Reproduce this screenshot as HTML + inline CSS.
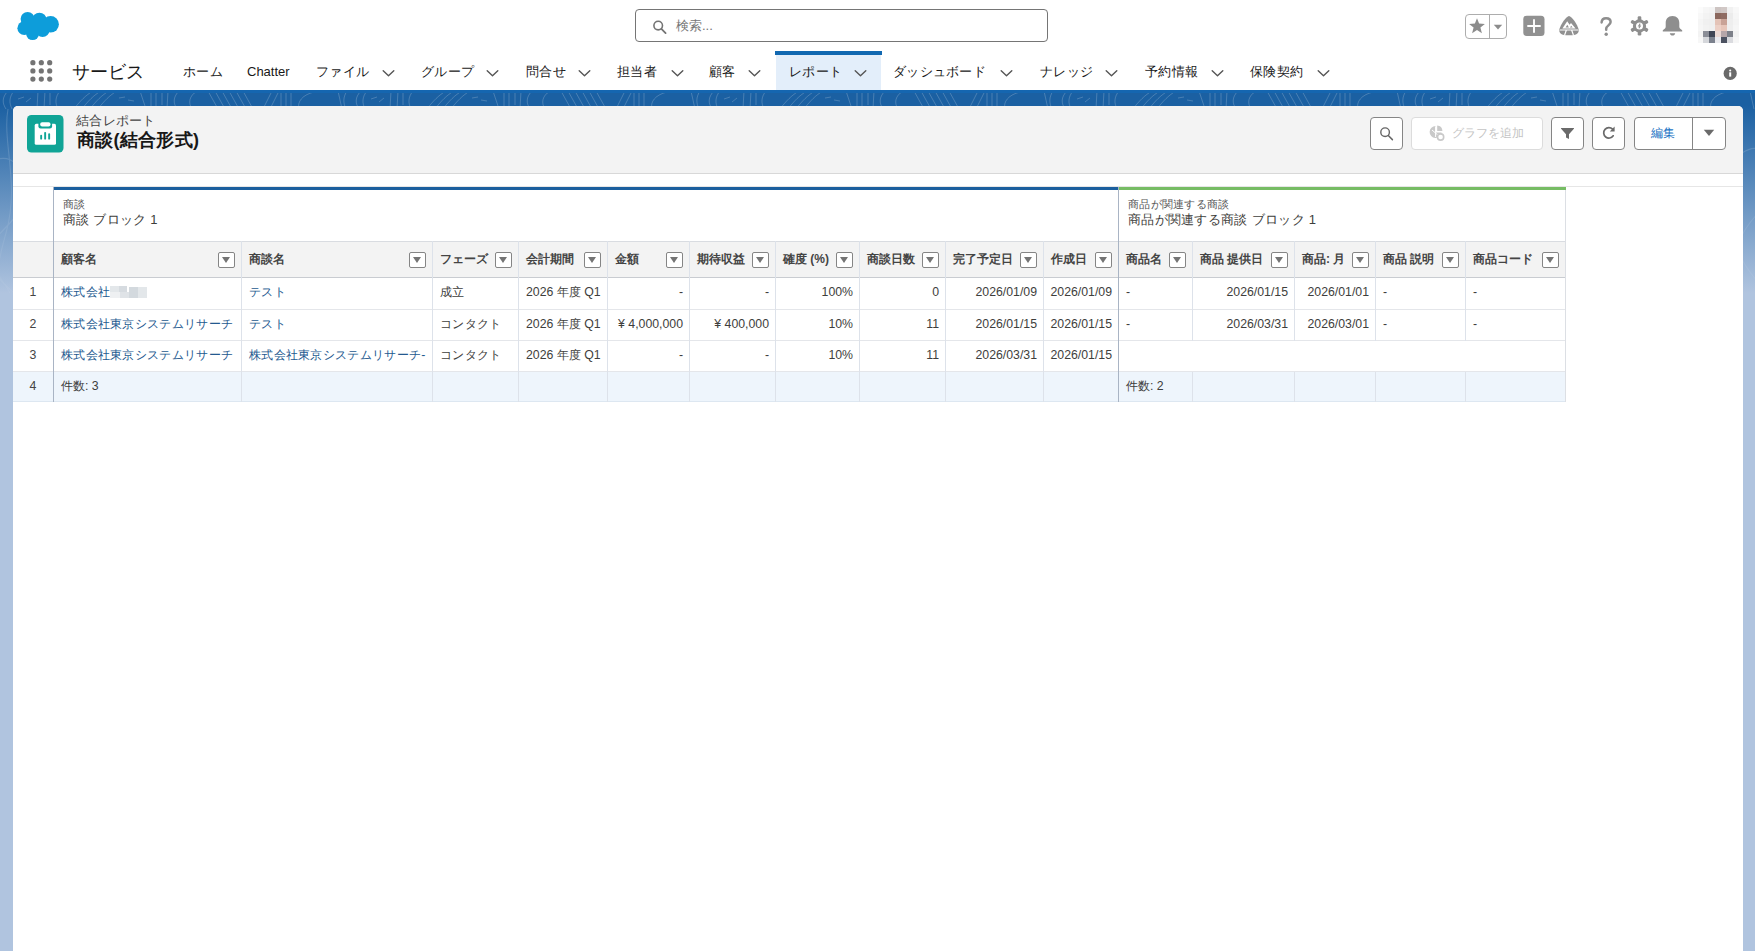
<!DOCTYPE html>
<html lang="ja"><head><meta charset="utf-8"><title>商談(結合形式) | Salesforce</title>
<style>
*{box-sizing:border-box;margin:0;padding:0}
html,body{width:1755px;height:951px;overflow:hidden}
body{position:relative;background:#B0C4DF;font-family:"Liberation Sans",sans-serif;font-size:13px;color:#3e3e3c}
.a{position:absolute;white-space:nowrap}
.t{position:absolute;white-space:nowrap;line-height:20px;height:20px}
#hdr{left:0;top:0;width:1755px;height:90px;background:#fff}
#navline{left:0;top:90px;width:1755px;height:3px;background:#1566b0}
#band{left:0;top:93px;width:1755px;height:200px;background:linear-gradient(to bottom,#1b60a2 0,#1b60a2 6%,rgba(176,196,223,0) 100%)}
#panel{left:13px;top:106px;width:1730px;height:860px;background:#fff;border-radius:5px 5px 0 0}
#phead{left:0;top:0;width:1730px;height:68px;background:#f3f3f3;border-bottom:1px solid #d8d8d8;border-radius:5px 5px 0 0}
.nav{font-size:13.3px;color:#181818;top:62px;letter-spacing:.25px}
.btn{position:absolute;top:11px;height:33px;background:#fff;border:1px solid #858585;border-radius:4px}
.th{font-size:12px;font-weight:bold;color:#444;top:143px}
.td{font-size:12.3px;color:#3e3e3c}
.j{letter-spacing:.3px}
.lk{color:#24598f}
.dd{position:absolute;width:17px;height:16px;border:1px solid #858585;border-radius:2px;background:#fff;top:146px}
.dd:after{content:"";position:absolute;left:3px;top:4px;border-left:4.5px solid transparent;border-right:4.5px solid transparent;border-top:6px solid #747474}
.vl{position:absolute;width:1px;background:#dde2ea}
.hl{position:absolute;height:1px;background:#e4e6ea}
</style></head><body>
<div class="a" id="navline"></div>
<div class="a" id="band"></div>
<svg class="a" style="left:0;top:93px" width="1755" height="200" viewBox="0 0 1755 200"><defs><pattern id="tp" width="353" height="200" patternUnits="userSpaceOnUse"><path d="M8 -2 C2 4 2 10 6 16 M14 -2 C9 4 9 10 12 16 M18 6 L24 4 M26 9 L31 5 M38 -2 L37 16 M45 -2 L44 16 M50 0 L50 12 M60 -2 C55 4 55 10 58 16 M74 16 C80 8 86 2 93 -2 M82 16 C88 8 94 2 101 -2 M90 16 C96 8 102 2 109 -2 M98 16 C104 8 110 2 117 -2 M119 5 L125 4 M128 7 L134 8 M140 -2 L146 16 M151 -2 L151 16 M156 -2 L156 16 M162 0 L162 12 M168 -2 L167 16 M179 -2 C173 4 173 10 177 16 M197 -2 C189 3 188 10 192 16 M208 -2 L218 16 M215 -2 L225 16 M222 -2 L232 16 M229 -2 L239 16 M236 -2 L246 16 M243 -2 L253 16 M263 16 L272 -2 M270 16 L279 -2 M281 -2 L281 16 M286 -2 L286 16 M291 0 L291 14 M314 -1 C302 2 297 9 299 16 M338 -2 L342 16 M347 -2 C343 4 343 10 346 16" fill="none" stroke="#fff" stroke-opacity=".2" stroke-width="1"/><path d="M8 16 C2 50 20 90 6 140 S0 180 10 200 M346 16 C340 50 352 90 346 150 S350 190 344 200 M-10 70 C20 50 40 100 10 130 S-20 170 14 200 M330 60 C360 40 372 90 346 120 S320 160 352 196 M100 30 C120 60 90 90 110 120 M250 40 C270 70 240 100 262 130" fill="none" stroke="#fff" stroke-opacity=".18" stroke-width="1.1"/></pattern><linearGradient id="fd" x1="0" y1="0" x2="0" y2="1"><stop offset="0" stop-color="#fff"/><stop offset="1" stop-color="#fff" stop-opacity=".25"/></linearGradient><mask id="mk"><rect width="1755" height="200" fill="url(#fd)"/></mask></defs><rect width="1755" height="200" fill="url(#tp)" mask="url(#mk)"/></svg>
<div class="a" id="hdr">
<svg class="a" style="left:17px;top:11px" width="43" height="30" viewBox="17 11 43 30"><g fill="#0d9dda"><circle cx="27.6" cy="18.9" r="7"/><circle cx="39.4" cy="20" r="7.3"/><circle cx="50.6" cy="24.3" r="8.3"/><circle cx="24.3" cy="28.2" r="6.9"/><circle cx="32.6" cy="33.6" r="6.5"/><circle cx="42.6" cy="30" r="6.9"/><rect x="24" y="18" width="26" height="14"/></g></svg>
<div class="a" style="left:635px;top:9px;width:413px;height:33px;border:1px solid #757575;border-radius:4px;background:#fff"></div>
<svg class="a" style="left:652px;top:19px" width="16" height="16" viewBox="0 0 16 16"><circle cx="6.2" cy="6.6" r="4.3" fill="none" stroke="#747474" stroke-width="1.6"/><path d="M9.4 9.9 L13.6 14.1" stroke="#747474" stroke-width="1.8" stroke-linecap="round"/></svg>
<div class="t" style="left:676px;top:16px;font-size:13px;color:#767676">検索...</div>
<div class="a" style="left:1465px;top:14px;width:42px;height:25px;border:1px solid #adadad;border-radius:4px;background:#fff"></div>
<div class="a" style="left:1489px;top:15px;width:1px;height:23px;background:#adadad"></div>
<svg class="a" style="left:1468px;top:17px" width="18" height="18" viewBox="0 0 18 18"><path d="M9 1.2 L11.1 6.6 L16.9 6.9 L12.4 10.6 L13.9 16.2 L9 13.1 L4.1 16.2 L5.6 10.6 L1.1 6.9 L6.9 6.6 Z" fill="#8c8c8c"/></svg>
<svg class="a" style="left:1493px;top:24px" width="10" height="6" viewBox="0 0 10 6"><path d="M0.8 0.8 H9.2 L5 5.4 Z" fill="#8c8c8c"/></svg>
<svg class="a" style="left:1523px;top:15px" width="22" height="22" viewBox="0 0 22 22"><rect x="0.3" y="0.8" width="21.2" height="20.2" rx="3.5" fill="#919191"/><path d="M11 5 V17 M5 11 H17" stroke="#fff" stroke-width="1.9" stroke-linecap="round"/></svg>
<svg class="a" style="left:1558px;top:15px" width="22" height="22" viewBox="0 0 22 22"><path d="M11 0.9 C13.6 1.6 19.4 8.6 20.7 14.6 C21.2 17.2 19.6 19.2 17.2 19.7 C13.2 20.5 8.8 20.5 4.8 19.7 C2.4 19.2 0.8 17.2 1.3 14.6 C2.6 8.6 8.4 1.6 11 0.9 Z" fill="#919191"/><path d="M4.4 13.6 L9.2 6.2 L11.6 9.8 L13 8 L17.6 13.6 Z" fill="#fff"/><path d="M7.6 12.6 L9.3 9.8 L10.9 12.6 Z M12 12.6 L13.2 10.8 L14.6 12.6 Z" fill="#919191"/><path d="M1.6 15 H20.4 M8.4 15 L6.6 20 M13.6 15 L15.4 20" stroke="#fff" stroke-width="1.2" fill="none"/></svg>
<svg class="a" style="left:1598px;top:15px" width="16" height="22" viewBox="0 0 16 22"><path d="M3.6 7.4 C3.8 4.6 5.6 3.3 8.1 3.3 C10.7 3.3 12.6 4.8 12.6 7.1 C12.6 10.2 8.2 10.6 8.2 13.8 V14.8" fill="none" stroke="#8e8e8e" stroke-width="2.5" stroke-linecap="round"/><circle cx="8.2" cy="19.2" r="1.7" fill="#8e8e8e"/></svg>
<svg class="a" style="left:1629px;top:15px" width="21" height="22" viewBox="0 0 21 22"><g fill="#8e8e8e"><rect x="8.7" y="1.3" width="3.6" height="4.6" rx="1.2" transform="rotate(0 10.5 10.9)"/><rect x="8.7" y="1.3" width="3.6" height="4.6" rx="1.2" transform="rotate(60 10.5 10.9)"/><rect x="8.7" y="1.3" width="3.6" height="4.6" rx="1.2" transform="rotate(120 10.5 10.9)"/><rect x="8.7" y="1.3" width="3.6" height="4.6" rx="1.2" transform="rotate(180 10.5 10.9)"/><rect x="8.7" y="1.3" width="3.6" height="4.6" rx="1.2" transform="rotate(240 10.5 10.9)"/><rect x="8.7" y="1.3" width="3.6" height="4.6" rx="1.2" transform="rotate(300 10.5 10.9)"/><circle cx="10.5" cy="10.9" r="6.6"/></g><circle cx="10.5" cy="10.9" r="3.5" fill="#fff"/><path d="M11.2 8.6 L9.7 11 H11.3 L9.9 13.2" stroke="#8e8e8e" stroke-width="1.1" fill="none"/></svg>
<svg class="a" style="left:1662px;top:15px" width="21" height="22" viewBox="0 0 21 22"><path d="M10.5 1 C15 1 17.3 4.2 17.3 8 V11.8 C17.3 13.6 19 14.4 20.2 15.2 V16.6 H0.8 V15.2 C2 14.4 3.7 13.6 3.7 11.8 V8 C3.7 4.2 6 1 10.5 1 Z" fill="#8e8e8e"/><path d="M7.8 18.2 H13.2 C13 19.7 11.8 20.5 10.5 20.5 C9.2 20.5 8 19.7 7.8 18.2 Z" fill="#8e8e8e"/></svg>
<div class="a" style="left:0;top:0;filter:blur(0.7px)">
<div class="a" style="left:1697.5px;top:7.0px;width:6.1px;height:6.3px;background:#fbfbfb"></div>
<div class="a" style="left:1703.3px;top:7.0px;width:6.2px;height:6.3px;background:#f6f6f6"></div>
<div class="a" style="left:1709.2px;top:7.0px;width:6.3px;height:6.3px;background:#f4f4f4"></div>
<div class="a" style="left:1715.2px;top:7.0px;width:6.1px;height:6.3px;background:#cdc4c2"></div>
<div class="a" style="left:1721.0px;top:7.0px;width:6.0px;height:6.3px;background:#d1c8c6"></div>
<div class="a" style="left:1726.7px;top:7.0px;width:6.3px;height:6.3px;background:#f1f1f1"></div>
<div class="a" style="left:1732.7px;top:7.0px;width:6.2px;height:6.3px;background:#f8f8f8"></div>
<div class="a" style="left:1697.5px;top:13.0px;width:6.1px;height:6.1px;background:#f8f8f8"></div>
<div class="a" style="left:1703.3px;top:13.0px;width:6.2px;height:6.1px;background:#f3f3f3"></div>
<div class="a" style="left:1709.2px;top:13.0px;width:6.3px;height:6.1px;background:#f1f1f1"></div>
<div class="a" style="left:1715.2px;top:13.0px;width:6.1px;height:6.1px;background:#8b675d"></div>
<div class="a" style="left:1721.0px;top:13.0px;width:6.0px;height:6.1px;background:#8f6b62"></div>
<div class="a" style="left:1726.7px;top:13.0px;width:6.3px;height:6.1px;background:#ececec"></div>
<div class="a" style="left:1732.7px;top:13.0px;width:6.2px;height:6.1px;background:#f6f6f6"></div>
<div class="a" style="left:1697.5px;top:18.8px;width:6.1px;height:6.2px;background:#f5f5f5"></div>
<div class="a" style="left:1703.3px;top:18.8px;width:6.2px;height:6.2px;background:#f0f0f0"></div>
<div class="a" style="left:1709.2px;top:18.8px;width:6.3px;height:6.2px;background:#efefef"></div>
<div class="a" style="left:1715.2px;top:18.8px;width:6.1px;height:6.2px;background:#e4c3b7"></div>
<div class="a" style="left:1721.0px;top:18.8px;width:6.0px;height:6.2px;background:#c9a397"></div>
<div class="a" style="left:1726.7px;top:18.8px;width:6.3px;height:6.2px;background:#eeeeee"></div>
<div class="a" style="left:1732.7px;top:18.8px;width:6.2px;height:6.2px;background:#f4f4f4"></div>
<div class="a" style="left:1697.5px;top:24.7px;width:6.1px;height:6.2px;background:#f6f6f6"></div>
<div class="a" style="left:1703.3px;top:24.7px;width:6.2px;height:6.2px;background:#f2f2f2"></div>
<div class="a" style="left:1709.2px;top:24.7px;width:6.3px;height:6.2px;background:#f0f0f0"></div>
<div class="a" style="left:1715.2px;top:24.7px;width:6.1px;height:6.2px;background:#ecd0c6"></div>
<div class="a" style="left:1721.0px;top:24.7px;width:6.0px;height:6.2px;background:#e7c6ba"></div>
<div class="a" style="left:1726.7px;top:24.7px;width:6.3px;height:6.2px;background:#efefef"></div>
<div class="a" style="left:1732.7px;top:24.7px;width:6.2px;height:6.2px;background:#f6f6f6"></div>
<div class="a" style="left:1697.5px;top:30.6px;width:6.1px;height:6.3px;background:#f3f3f3"></div>
<div class="a" style="left:1703.3px;top:30.6px;width:6.2px;height:6.3px;background:#8b8e97"></div>
<div class="a" style="left:1709.2px;top:30.6px;width:6.3px;height:6.3px;background:#3f4554"></div>
<div class="a" style="left:1715.2px;top:30.6px;width:6.1px;height:6.3px;background:#ead8d3"></div>
<div class="a" style="left:1721.0px;top:30.6px;width:6.0px;height:6.3px;background:#b6a6a9"></div>
<div class="a" style="left:1726.7px;top:30.6px;width:6.3px;height:6.3px;background:#7d8089"></div>
<div class="a" style="left:1732.7px;top:30.6px;width:6.2px;height:6.3px;background:#f2f2f2"></div>
<div class="a" style="left:1697.5px;top:36.6px;width:6.1px;height:6.3px;background:#f7f7f7"></div>
<div class="a" style="left:1703.3px;top:36.6px;width:6.2px;height:6.3px;background:#d5d7db"></div>
<div class="a" style="left:1709.2px;top:36.6px;width:6.3px;height:6.3px;background:#7b818d"></div>
<div class="a" style="left:1715.2px;top:36.6px;width:6.1px;height:6.3px;background:#eaeaee"></div>
<div class="a" style="left:1721.0px;top:36.6px;width:6.0px;height:6.3px;background:#4c5261"></div>
<div class="a" style="left:1726.7px;top:36.6px;width:6.3px;height:6.3px;background:#dadbdf"></div>
<div class="a" style="left:1732.7px;top:36.6px;width:6.2px;height:6.3px;background:#f6f6f6"></div>
</div>
<svg class="a" style="left:28px;top:58px" width="26" height="26" viewBox="0 0 26 26"><g fill="#747474"><circle cx="4.9" cy="4.7" r="2.6"/><circle cx="13.3" cy="4.7" r="2.6"/><circle cx="21.7" cy="4.7" r="2.6"/><circle cx="4.9" cy="12.9" r="2.6"/><circle cx="13.3" cy="12.9" r="2.6"/><circle cx="21.7" cy="12.9" r="2.6"/><circle cx="4.9" cy="21.1" r="2.6"/><circle cx="13.3" cy="21.1" r="2.6"/><circle cx="21.7" cy="21.1" r="2.6"/></g></svg>
<div class="t" style="left:72px;top:58px;height:28px;line-height:28px;font-size:18px;color:#181818">サービス</div>
<div class="a" style="left:776px;top:54px;width:105px;height:36px;background:#e3eefa"></div>
<div class="a" style="left:775px;top:51px;width:107px;height:4px;background:#1168b1"></div>
<div class="t nav" style="left:183px">ホーム</div>
<div class="t nav" style="left:247px;font-size:13px;letter-spacing:0">Chatter</div>
<div class="t nav" style="left:316px">ファイル</div>
<svg class="a" style="left:381px;top:69px" width="15" height="9" viewBox="0 0 15 9"><path d="M2.2 1.8 L7.5 6.8 L12.8 1.8" fill="none" stroke="#555" stroke-width="1.4" stroke-linecap="round" stroke-linejoin="round"/></svg>
<div class="t nav" style="left:421px">グループ</div>
<svg class="a" style="left:485px;top:69px" width="15" height="9" viewBox="0 0 15 9"><path d="M2.2 1.8 L7.5 6.8 L12.8 1.8" fill="none" stroke="#555" stroke-width="1.4" stroke-linecap="round" stroke-linejoin="round"/></svg>
<div class="t nav" style="left:526px">問合せ</div>
<svg class="a" style="left:577px;top:69px" width="15" height="9" viewBox="0 0 15 9"><path d="M2.2 1.8 L7.5 6.8 L12.8 1.8" fill="none" stroke="#555" stroke-width="1.4" stroke-linecap="round" stroke-linejoin="round"/></svg>
<div class="t nav" style="left:617px">担当者</div>
<svg class="a" style="left:670px;top:69px" width="15" height="9" viewBox="0 0 15 9"><path d="M2.2 1.8 L7.5 6.8 L12.8 1.8" fill="none" stroke="#555" stroke-width="1.4" stroke-linecap="round" stroke-linejoin="round"/></svg>
<div class="t nav" style="left:709px">顧客</div>
<svg class="a" style="left:747px;top:69px" width="15" height="9" viewBox="0 0 15 9"><path d="M2.2 1.8 L7.5 6.8 L12.8 1.8" fill="none" stroke="#555" stroke-width="1.4" stroke-linecap="round" stroke-linejoin="round"/></svg>
<div class="t nav" style="left:789px">レポート</div>
<svg class="a" style="left:853px;top:69px" width="15" height="9" viewBox="0 0 15 9"><path d="M2.2 1.8 L7.5 6.8 L12.8 1.8" fill="none" stroke="#555" stroke-width="1.4" stroke-linecap="round" stroke-linejoin="round"/></svg>
<div class="t nav" style="left:893px">ダッシュボード</div>
<svg class="a" style="left:999px;top:69px" width="15" height="9" viewBox="0 0 15 9"><path d="M2.2 1.8 L7.5 6.8 L12.8 1.8" fill="none" stroke="#555" stroke-width="1.4" stroke-linecap="round" stroke-linejoin="round"/></svg>
<div class="t nav" style="left:1040px">ナレッジ</div>
<svg class="a" style="left:1104px;top:69px" width="15" height="9" viewBox="0 0 15 9"><path d="M2.2 1.8 L7.5 6.8 L12.8 1.8" fill="none" stroke="#555" stroke-width="1.4" stroke-linecap="round" stroke-linejoin="round"/></svg>
<div class="t nav" style="left:1145px">予約情報</div>
<svg class="a" style="left:1210px;top:69px" width="15" height="9" viewBox="0 0 15 9"><path d="M2.2 1.8 L7.5 6.8 L12.8 1.8" fill="none" stroke="#555" stroke-width="1.4" stroke-linecap="round" stroke-linejoin="round"/></svg>
<div class="t nav" style="left:1250px">保険契約</div>
<svg class="a" style="left:1316px;top:69px" width="15" height="9" viewBox="0 0 15 9"><path d="M2.2 1.8 L7.5 6.8 L12.8 1.8" fill="none" stroke="#555" stroke-width="1.4" stroke-linecap="round" stroke-linejoin="round"/></svg>
<svg class="a" style="left:1722px;top:65px" width="16" height="16" viewBox="0 0 16 16"><circle cx="8.2" cy="8.4" r="6.6" fill="#6a6a6a"/><circle cx="8.2" cy="5.5" r="1.05" fill="#fff"/><rect x="7.2" y="7.3" width="2" height="4.3" fill="#fff"/></svg>
</div>
<div class="a" id="panel">
<div class="a" id="phead">
<svg class="a" style="left:14px;top:9px" width="37" height="38" viewBox="0 0 37 38"><rect x="0" y="0" width="36.5" height="37.5" rx="4.5" fill="#10a496"/><rect x="7.7" y="8.8" width="21.3" height="21" rx="1.6" fill="#fff"/><rect x="11.4" y="5.6" width="13.7" height="7.9" rx="2.2" fill="#10a496"/><rect x="13.2" y="7.2" width="10.3" height="4.2" rx="1.9" fill="#fff"/><rect x="13.2" y="19.8" width="1.9" height="4.8" rx="0.9" fill="#10a496"/><rect x="17.2" y="16.9" width="1.9" height="7.7" rx="0.9" fill="#10a496"/><rect x="21.2" y="18.2" width="1.9" height="6.4" rx="0.9" fill="#10a496"/></svg>
<div class="t" style="left:63px;top:5px;font-size:13px;color:#444;letter-spacing:.3px">結合レポート</div>
<div class="t" style="left:64px;top:21px;height:26px;line-height:26px;font-size:18px;font-weight:bold;color:#181818;letter-spacing:.3px">商談(結合形式)</div>
<div class="btn" style="left:1357px;width:33px"></div>
<svg class="a" style="left:1366px;top:20px" width="16" height="16" viewBox="0 0 16 16"><circle cx="6.1" cy="6.2" r="4.3" fill="none" stroke="#666" stroke-width="1.4"/><path d="M9.3 9.5 L13.4 13.6" stroke="#666" stroke-width="1.5" stroke-linecap="round"/></svg>
<div class="btn" style="left:1398px;width:132px;border-color:#dcdcdc"></div>
<svg class="a" style="left:1416px;top:19px" width="17" height="17" viewBox="0 0 17 17"><path d="M6.6 1 A6 6 0 1 0 12.6 7.6 H6.6 Z" fill="#c9c9c9"/><path d="M8.2 0.6 A5.6 5.6 0 0 1 13.4 6 H8.2 Z" fill="#c9c9c9"/><path d="M3 5 L10 11 M6.6 1.5 V12" stroke="#fff" stroke-width="1"/><circle cx="11.6" cy="12" r="3.1" fill="#fff" stroke="#c9c9c9" stroke-width="1.6"/></svg>
<div class="t" style="left:1439px;top:16.5px;font-size:12px;color:#c4c4c4">グラフを追加</div>
<div class="btn" style="left:1538px;width:33px"></div>
<svg class="a" style="left:1547px;top:20px" width="15" height="15" viewBox="0 0 15 15"><path d="M1.4 2 H13.6 C14 2 14.2 2.5 13.9 2.8 L9 8.2 V13 L6 11.6 V8.2 L1.1 2.8 C0.8 2.5 1 2 1.4 2 Z" fill="#6a6a6a"/></svg>
<div class="btn" style="left:1579px;width:33px"></div>
<svg class="a" style="left:1588px;top:19px" width="16" height="16" viewBox="0 0 16 16"><path d="M12.2 10.8 A5.2 5.2 0 1 1 11.6 4.2" fill="none" stroke="#6a6a6a" stroke-width="1.7" stroke-linecap="round"/><path d="M13.6 1.6 V6.4 H8.8 Z" fill="#6a6a6a"/></svg>
<div class="btn" style="left:1621px;width:92px"></div>
<div class="a" style="left:1679px;top:12px;width:1px;height:31px;background:#858585"></div>
<div class="t" style="left:1638px;top:16.5px;font-size:12px;color:#1b73c4">編集</div>
<svg class="a" style="left:1690px;top:23px" width="12" height="8" viewBox="0 0 12 8"><path d="M0.8 0.8 H11.2 L6 7 Z" fill="#6a6a6a"/></svg>
</div>
<div class="hl" style="left:0;top:80px;width:1730px;background:#e6e6e6"></div>
<div class="a" style="left:0;top:135px;width:1553px;height:37px;background:#f3f3f3;border-top:1px solid #d9dce1;border-bottom:1px solid #c9ccd1"></div>
<div class="a" style="left:0;top:266px;width:1553px;height:30px;background:#eef5fc;border-bottom:1px solid #dde7f1"></div>
<div class="hl" style="left:0;top:203px;width:1553px"></div>
<div class="hl" style="left:0;top:234px;width:1553px"></div>
<div class="hl" style="left:0;top:265px;width:1553px"></div>
<div class="vl" style="left:228px;top:135px;height:161px"></div>
<div class="vl" style="left:419px;top:135px;height:161px"></div>
<div class="vl" style="left:505px;top:135px;height:161px"></div>
<div class="vl" style="left:594px;top:135px;height:161px"></div>
<div class="vl" style="left:676px;top:135px;height:161px"></div>
<div class="vl" style="left:762px;top:135px;height:161px"></div>
<div class="vl" style="left:846px;top:135px;height:161px"></div>
<div class="vl" style="left:932px;top:135px;height:161px"></div>
<div class="vl" style="left:1030px;top:135px;height:161px"></div>
<div class="vl" style="left:1179px;top:135px;height:100px"></div>
<div class="vl" style="left:1179px;top:266px;height:30px"></div>
<div class="vl" style="left:1281px;top:135px;height:100px"></div>
<div class="vl" style="left:1281px;top:266px;height:30px"></div>
<div class="vl" style="left:1362px;top:135px;height:100px"></div>
<div class="vl" style="left:1362px;top:266px;height:30px"></div>
<div class="vl" style="left:1452px;top:135px;height:100px"></div>
<div class="vl" style="left:1452px;top:266px;height:30px"></div>
<div class="vl" style="left:1552px;top:84px;height:212px;background:#dcdfe4"></div>
<div class="a" style="left:40px;top:81px;width:1066px;height:3px;background:#1b5f9e"></div>
<div class="a" style="left:1106px;top:81px;width:447px;height:3px;background:#76bc64"></div>
<div class="vl" style="left:40px;top:81px;height:215px;background:#a9b4c4"></div>
<div class="vl" style="left:1105px;top:81px;height:215px;background:#a9b4c4"></div>
<div class="t" style="left:50px;top:87.5px;font-size:11px;color:#555">商談</div>
<div class="t" style="left:50px;top:104px;font-size:13px;color:#3e3e3c;letter-spacing:.25px">商談 ブロック 1</div>
<div class="t" style="left:1115px;top:87.5px;font-size:11px;color:#555;letter-spacing:.28px">商品が関連する商談</div>
<div class="t" style="left:1115px;top:104px;font-size:13px;color:#3e3e3c;letter-spacing:.3px">商品が関連する商談 ブロック 1</div>
<div class="t td" style="left:0px;top:176px;width:40px;text-align:center;color:#444">1</div>
<div class="t td" style="left:0px;top:208px;width:40px;text-align:center;color:#444">2</div>
<div class="t td" style="left:0px;top:239px;width:40px;text-align:center;color:#444">3</div>
<div class="t td" style="left:0px;top:270px;width:40px;text-align:center;color:#444">4</div>
<div class="t th" style="left:48px">顧客名</div>
<div class="dd" style="left:205px"></div>
<div class="t td lk j" style="left:48px;top:176px">株式会社</div>
<div class="t td lk j" style="left:48px;top:208px">株式会社東京システムリサーチ</div>
<div class="t td lk j" style="left:48px;top:239px">株式会社東京システムリサーチ</div>
<div class="t th" style="left:236px">商談名</div>
<div class="dd" style="left:396px"></div>
<div class="t td lk j" style="left:236px;top:176px">テスト</div>
<div class="t td lk j" style="left:236px;top:208px">テスト</div>
<div class="t td lk j" style="left:236px;top:239px">株式会社東京システムリサーチ-</div>
<div class="t th" style="left:427px">フェーズ</div>
<div class="dd" style="left:482px"></div>
<div class="t td j" style="left:427px;top:176px">成立</div>
<div class="t td j" style="left:427px;top:208px">コンタクト</div>
<div class="t td j" style="left:427px;top:239px">コンタクト</div>
<div class="t th" style="left:513px">会計期間</div>
<div class="dd" style="left:571px"></div>
<div class="t td" style="left:513px;top:176px">2026 年度 Q1</div>
<div class="t td" style="left:513px;top:208px">2026 年度 Q1</div>
<div class="t td" style="left:513px;top:239px">2026 年度 Q1</div>
<div class="t th" style="left:602px">金額</div>
<div class="dd" style="left:653px"></div>
<div class="t td" style="right:1060px;top:176px">-</div>
<div class="t td" style="right:1060px;top:208px">¥ 4,000,000</div>
<div class="t td" style="right:1060px;top:239px">-</div>
<div class="t th" style="left:684px">期待収益</div>
<div class="dd" style="left:739px"></div>
<div class="t td" style="right:974px;top:176px">-</div>
<div class="t td" style="right:974px;top:208px">¥ 400,000</div>
<div class="t td" style="right:974px;top:239px">-</div>
<div class="t th" style="left:770px">確度 (%)</div>
<div class="dd" style="left:823px"></div>
<div class="t td" style="right:890px;top:176px">100%</div>
<div class="t td" style="right:890px;top:208px">10%</div>
<div class="t td" style="right:890px;top:239px">10%</div>
<div class="t th" style="left:854px">商談日数</div>
<div class="dd" style="left:909px"></div>
<div class="t td" style="right:804px;top:176px">0</div>
<div class="t td" style="right:804px;top:208px">11</div>
<div class="t td" style="right:804px;top:239px">11</div>
<div class="t th" style="left:940px">完了予定日</div>
<div class="dd" style="left:1007px"></div>
<div class="t td" style="right:706px;top:176px">2026/01/09</div>
<div class="t td" style="right:706px;top:208px">2026/01/15</div>
<div class="t td" style="right:706px;top:239px">2026/03/31</div>
<div class="t th" style="left:1038px">作成日</div>
<div class="dd" style="left:1082px"></div>
<div class="t td" style="right:631px;top:176px">2026/01/09</div>
<div class="t td" style="right:631px;top:208px">2026/01/15</div>
<div class="t td" style="right:631px;top:239px">2026/01/15</div>
<div class="t th" style="left:1113px">商品名</div>
<div class="dd" style="left:1156px"></div>
<div class="t td" style="left:1113px;top:176px">-</div>
<div class="t td" style="left:1113px;top:208px">-</div>
<div class="t th" style="left:1187px">商品 提供日</div>
<div class="dd" style="left:1258px"></div>
<div class="t td" style="right:455px;top:176px">2026/01/15</div>
<div class="t td" style="right:455px;top:208px">2026/03/31</div>
<div class="t th" style="left:1289px">商品: 月</div>
<div class="dd" style="left:1339px"></div>
<div class="t td" style="right:374px;top:176px">2026/01/01</div>
<div class="t td" style="right:374px;top:208px">2026/03/01</div>
<div class="t th" style="left:1370px">商品 説明</div>
<div class="dd" style="left:1429px"></div>
<div class="t td" style="left:1370px;top:176px">-</div>
<div class="t td" style="left:1370px;top:208px">-</div>
<div class="t th" style="left:1460px">商品コード</div>
<div class="dd" style="left:1529px"></div>
<div class="t td" style="left:1460px;top:176px">-</div>
<div class="t td" style="left:1460px;top:208px">-</div>
<div class="a" style="left:97px;top:180px;width:9px;height:6px;background:#e3e7ea"></div>
<div class="a" style="left:106px;top:180px;width:8px;height:6px;background:#d6dbe0"></div>
<div class="a" style="left:97px;top:186px;width:10px;height:6px;background:#eef0f2"></div>
<div class="a" style="left:107px;top:186px;width:9px;height:6px;background:#dfe3e7"></div>
<div class="a" style="left:116px;top:181px;width:9px;height:11px;background:#d3d9de"></div>
<div class="a" style="left:125px;top:181px;width:9px;height:11px;background:#e3e7ea"></div>
<div class="t td" style="left:48px;top:270px">件数: 3</div>
<div class="t td" style="left:1113px;top:270px">件数: 2</div>
</div>
</body></html>
